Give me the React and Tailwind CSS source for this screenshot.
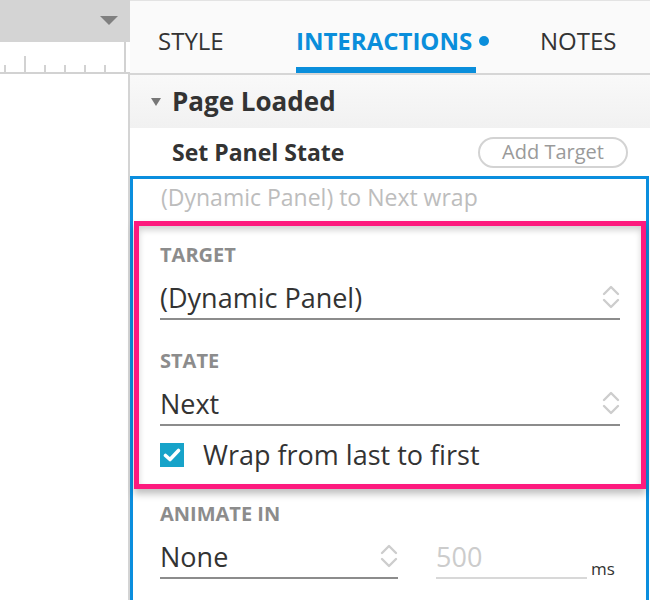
import React from 'react';

function Chevrons({ className = '' }) {
  return (
    <svg width="18" height="26" viewBox="0 0 18 26" className={`shrink-0 ${className}`}>
      <polyline points="2,10 9,3 16,10" fill="none" stroke="#cdcdcd" strokeWidth="2.4" strokeLinecap="round" strokeLinejoin="round" />
      <polyline points="2,16 9,23 16,16" fill="none" stroke="#cdcdcd" strokeWidth="2.4" strokeLinecap="round" strokeLinejoin="round" />
    </svg>
  );
}

function Ruler() {
  const ticks = [5, 25, 45, 65, 85, 105];
  return (
    <svg width="130" height="32" viewBox="0 0 130 32" className="block shrink-0">
      {ticks.map((x) => (
        <rect key={x} x={x - 1} y={x === 25 ? 14 : 23} width="2" height={x === 25 ? 16 : 7} fill="#d2d2d2" />
      ))}
      <rect x="124" y="0" width="2" height="30" fill="#d2d2d2" />
      <rect x="0" y="30" width="130" height="2" fill="#d2d2d2" />
    </svg>
  );
}

function SelectField({ value, className = '' }) {
  return (
    <div className={`shrink-0 flex items-center justify-between h-[50px] pt-[6px] border-b-2 border-[#8c8c8c] ${className}`}>
      <span className="text-[27px] text-[#333] leading-none">{value}</span>
      <Chevrons />
    </div>
  );
}

function Label({ children, className = '' }) {
  return (
    <div className={`shrink-0 h-[30px] flex items-center text-[20px] font-bold text-[#8c8c8c] ${className}`}>
      {children}
    </div>
  );
}

function Tab({ label, active, className = '' }) {
  return (
    <div className={`flex flex-col justify-end ${className}`}>
      <div className="flex items-center h-[40px] mb-[6px]">
        <span className={active ? 'font-bold text-[#0a8edb]' : 'text-[#333]'}>{label}</span>
        {active && <span className="ml-[7px] w-[10px] h-[10px] rounded-full bg-[#0a8edb]" />}
      </div>
      <div className={`h-[6px] ${active ? 'w-[180px] bg-[#0a8edb]' : ''}`} />
    </div>
  );
}

export default function App() {
  return (
    <div className="w-[650px] h-[600px] flex overflow-hidden bg-white" style={{ fontFamily: '"Open Sans", Lato, sans-serif' }}>
      {/* canvas side */}
      <div className="w-[130px] flex flex-col shrink-0">
        <div className="shrink-0 h-[42px] bg-[#d4d4d4] flex items-center justify-end pr-[12px]">
          <svg width="18" height="10" viewBox="0 0 18 10">
            <polygon points="0,0 18,0 9,9" fill="#808080" />
          </svg>
        </div>
        <Ruler />
        <div className="flex-1 flex">
          <div className="flex-1" />
          <div className="w-[2px] bg-[#d4d4d4]" />
        </div>
      </div>

      {/* inspector */}
      <div className="w-[520px] min-w-0 shrink-0 flex flex-col">
        {/* tabs */}
        <div className="shrink-0 h-[75px] bg-[#fafafa] border-t border-[#e3e3e3] border-b-2 border-b-[#d6d6d6] flex items-stretch text-[24px]">
          <div className="w-[28px]" />
          <Tab label="STYLE" className="w-[138px]" />
          <Tab label="INTERACTIONS" active className="w-[244px]" />
          <Tab label="NOTES" />
        </div>

        {/* event header */}
        <div className="shrink-0 h-[53px] bg-gradient-to-b from-[#f9f9f9] to-[#f1f1f1] flex items-center">
          <svg width="10" height="8" viewBox="0 0 10 8" className="ml-[21px] mr-[11px]">
            <polygon points="0,0 10,0 5,8" fill="#777" />
          </svg>
          <span className="text-[26px] font-bold text-[#333]">Page Loaded</span>
        </div>

        {/* action row */}
        <div className="shrink-0 h-[48px] flex items-center justify-between pl-[42px] pr-[22px]">
          <span className="text-[23px] font-bold text-[#333]">Set Panel State</span>
          <button className="w-[150px] h-[31px] rounded-full border-2 border-[#d3d3d3] text-[20px] text-[#9a9a9a] leading-none">
            Add Target
          </button>
        </div>

        {/* selected action */}
        <div className="shrink-0 mr-[1px] border-[3px] border-b-0 border-[#0b8ede] pb-[40px]">
          <div className="h-[42px] flex items-center pb-[6px] pl-[28px] text-[23px] text-[#bdbdbd]">
            (Dynamic Panel) to Next wrap
          </div>

          <div className="ml-[1px] border-[5px] border-[#fd1a7e] shadow-[0_5px_7px_rgba(0,0,0,0.25)]">
            <div className="flex flex-col px-[21px] pt-[14px] pb-[11px] shadow-[inset_0_4px_6px_rgba(0,0,0,0.18)]">
              <Label>TARGET</Label>
              <SelectField value="(Dynamic Panel)" />
              <Label className="mt-[26px]">STATE</Label>
              <SelectField value="Next" />
              <div className="mt-[11px] h-[36px] flex items-center">
                <div className="w-[24px] h-[24px] bg-[#17a3c9] flex items-center justify-center">
                  <svg width="18" height="14" viewBox="0 0 18 14">
                    <polyline points="2.5,7.5 7,11.5 15.5,2.5" fill="none" stroke="#fff" strokeWidth="3.6" strokeLinecap="round" strokeLinejoin="round" />
                  </svg>
                </div>
                <span className="ml-[19px] text-[27px] text-[#333]">Wrap from last to first</span>
              </div>
            </div>
          </div>

          <div className="flex flex-col pl-[27px] pr-[30px]">
            <Label className="mt-[10px]">ANIMATE IN</Label>
            <div className="flex items-end">
              <SelectField value="None" className="w-[238px]" />
              <div className="ml-[38px] w-[151px] h-[50px] pt-[6px] flex items-center border-b-2 border-[#d8d8d8]">
                <span className="text-[27px] text-[#cccccc] leading-none">500</span>
              </div>
              <span className="ml-[4px] mb-[2px] text-[17px] text-[#333] leading-none">ms</span>
            </div>
          </div>
        </div>
      </div>
    </div>
  );
}
